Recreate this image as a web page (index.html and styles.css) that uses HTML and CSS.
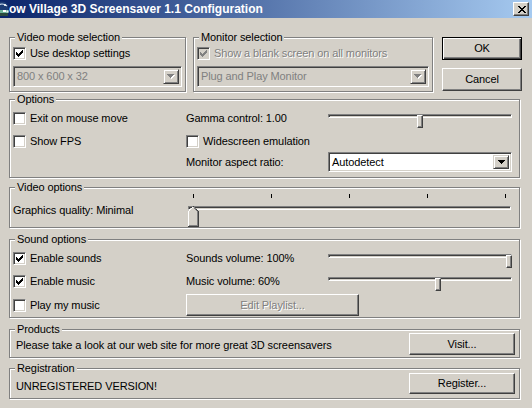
FILE: index.html
```html
<!DOCTYPE html>
<html>
<head>
<meta charset="utf-8">
<title>Snow Village 3D Screensaver 1.1 Configuration</title>
<link rel="stylesheet" href="styles.css">
</head>
<body>
<div class="window">
  <div class="titlebar">
    <svg class="app-icon" width="10" height="16" viewBox="6 0 10 16">
      <circle cx="8" cy="7" r="6.5" fill="#1d3c74"/>
      <path d="M3 5 Q8 1 13 5" stroke="#cfe0f0" stroke-width="1.2" fill="none"/>
      <circle cx="11" cy="4" r="1" fill="#ffffff"/>
      <rect x="1.5" y="9" width="13" height="3" fill="#6fb59a"/>
      <rect x="9" y="9" width="3" height="2" fill="#ffffff"/>
      <rect x="12.5" y="9.5" width="2" height="2" fill="#e8f4f0"/>
      <rect x="2" y="12" width="12" height="3" fill="#2c4a3e"/>
    </svg>
    <span class="title">ow Village 3D Screensaver 1.1 Configuration</span>
    <div class="close-btn">
      <svg width="8" height="7" viewBox="0 0 8 7" shape-rendering="crispEdges"><path fill="#000" d="M0 0h2v1h-2zM6 0h2v1h-2zM1 1h2v1h-2zM5 1h2v1h-2zM2 2h4v1h-4zM3 3h2v1h-2zM2 4h4v1h-4zM1 5h2v1h-2zM5 5h2v1h-2zM0 6h2v1h-2zM6 6h2v1h-2z"/></svg>
    </div>
  </div>

  <div class="client">
    <div class="row-top">
      <div class="group g-videomode">
        <span class="group-label">Video mode selection</span>
        <div class="check">
          <span class="box"><svg width="7" height="7" viewBox="0 0 7 7" shape-rendering="crispEdges"><path fill="#000" d="M6 0h1v1h-1zM5 1h2v1h-2zM0 2h1v1h-1zM4 2h3v1h-3zM0 3h2v1h-2zM3 3h3v1h-3zM0 4h5v1h-5zM1 5h3v1h-3zM2 6h1v1h-1z"/></svg></span>
          <span>Use desktop settings</span>
        </div>
        <div class="combo disabled w-videomode">
          <span class="combo-text">800 x 600 x 32</span>
          <span class="combo-btn"><svg width="8" height="5" viewBox="0 0 8 5" shape-rendering="crispEdges"><path fill="#fff" d="M1 1h7v1h-1v1h-1v1h-1v1h-1v-1h-1v-1h-1v-1h-1z"/><path fill="#808080" d="M0 0h7v1h-1v1h-1v1h-1v1h-1v-1h-1v-1h-1v-1h-1z"/></svg></span>
        </div>
      </div>

      <div class="group g-monitor">
        <span class="group-label">Monitor selection</span>
        <div class="check disabled">
          <span class="box"><svg width="7" height="7" viewBox="0 0 7 7" shape-rendering="crispEdges"><path fill="#808080" d="M6 0h1v1h-1zM5 1h2v1h-2zM0 2h1v1h-1zM4 2h3v1h-3zM0 3h2v1h-2zM3 3h3v1h-3zM0 4h5v1h-5zM1 5h3v1h-3zM2 6h1v1h-1z"/></svg></span>
          <span class="dis-text">Show a blank screen on all monitors</span>
        </div>
        <div class="combo disabled w-monitor">
          <span class="combo-text">Plug and Play Monitor</span>
          <span class="combo-btn"><svg width="8" height="5" viewBox="0 0 8 5" shape-rendering="crispEdges"><path fill="#fff" d="M1 1h7v1h-1v1h-1v1h-1v1h-1v-1h-1v-1h-1v-1h-1z"/><path fill="#808080" d="M0 0h7v1h-1v1h-1v1h-1v1h-1v-1h-1v-1h-1v-1h-1z"/></svg></span>
        </div>
      </div>

      <div class="btn-col">
        <div class="btn default btn-main">OK</div>
        <div class="btn btn-main">Cancel</div>
      </div>
    </div>

    <div class="group full g-options">
      <span class="group-label">Options</span>
      <div class="row r14">
        <div class="col-a">
          <div class="check"><span class="box"></span><span>Exit on mouse move</span></div>
        </div>
        <div class="col-b">Gamma control: 1.00</div>
        <div class="col-c">
          <div class="slider" style="--v:0.5"><div class="track"></div><div class="thumb"></div></div>
        </div>
      </div>
      <div class="row r14 gap9">
        <div class="col-a">
          <div class="check"><span class="box"></span><span>Show FPS</span></div>
        </div>
        <div class="col-bc">
          <div class="check"><span class="box"></span><span>Widescreen emulation</span></div>
        </div>
      </div>
      <div class="row r20 gap4">
        <div class="col-a"></div>
        <div class="col-b">Monitor aspect ratio:</div>
        <div class="col-c">
          <div class="combo w-aspect">
            <span class="combo-text">Autodetect</span>
            <span class="combo-btn"><svg width="7" height="4" viewBox="0 0 7 4" shape-rendering="crispEdges"><path fill="#000" d="M0 0h7v1h-1v1h-1v1h-1v1h-1v-1h-1v-1h-1v-1h-1z"/></svg></span>
          </div>
        </div>
      </div>
    </div>

    <div class="group full g-video">
      <span class="group-label">Video options</span>
      <div class="row">
        <div class="col-quality">Graphics quality: Minimal</div>
        <div class="tslider">
          <div class="ticks"><i></i><i></i><i></i><i></i><i></i></div>
          <div class="tbody" style="--v:0">
            <div class="track"></div>
            <svg class="pthumb" width="11" height="21" viewBox="0 0 11 21" shape-rendering="crispEdges">
              <polygon points="5.5,0.5 10.5,5.5 10.5,20.5 0.5,20.5 0.5,5.5" fill="#D4D0C8"/>
              <polyline points="0.5,20 0.5,5.5 5.5,0.5" fill="none" stroke="#ffffff" stroke-width="1"/>
              <polyline points="5.5,0.5 10.5,5.5 10.5,20.5 0,20.5" fill="none" stroke="#404040" stroke-width="1"/>
              <polyline points="6,1.5 9.5,5.5 9.5,19.5 1,19.5" fill="none" stroke="#808080" stroke-width="1"/>
            </svg>
          </div>
        </div>
      </div>
    </div>

    <div class="group full g-sound">
      <span class="group-label">Sound options</span>
      <div class="row r14">
        <div class="col-a">
          <div class="check"><span class="box"><svg width="7" height="7" viewBox="0 0 7 7" shape-rendering="crispEdges"><path fill="#000" d="M6 0h1v1h-1zM5 1h2v1h-2zM0 2h1v1h-1zM4 2h3v1h-3zM0 3h2v1h-2zM3 3h3v1h-3zM0 4h5v1h-5zM1 5h3v1h-3zM2 6h1v1h-1z"/></svg></span><span>Enable sounds</span></div>
        </div>
        <div class="col-b">Sounds volume: 100%</div>
        <div class="col-c">
          <div class="slider" style="--v:1"><div class="track"></div><div class="thumb"></div></div>
        </div>
      </div>
      <div class="row r14 gap9">
        <div class="col-a">
          <div class="check"><span class="box"><svg width="7" height="7" viewBox="0 0 7 7" shape-rendering="crispEdges"><path fill="#000" d="M6 0h1v1h-1zM5 1h2v1h-2zM0 2h1v1h-1zM4 2h3v1h-3zM0 3h2v1h-2zM3 3h3v1h-3zM0 4h5v1h-5zM1 5h3v1h-3zM2 6h1v1h-1z"/></svg></span><span>Enable music</span></div>
        </div>
        <div class="col-b">Music volume: 60%</div>
        <div class="col-c">
          <div class="slider" style="--v:0.6"><div class="track"></div><div class="thumb"></div></div>
        </div>
      </div>
      <div class="row r22 gap6">
        <div class="col-a">
          <div class="check"><span class="box"></span><span>Play my music</span></div>
        </div>
        <div class="btn btn-playlist dis-text">Edit Playlist...</div>
      </div>
    </div>

    <div class="group full g-products">
      <span class="group-label">Products</span>
      <div class="line-row">
        <span class="line-text">Please take a look at our web site for more great 3D screensavers</span>
        <div class="btn btn-wide">Visit...</div>
      </div>
    </div>

    <div class="group full g-reg">
      <span class="group-label">Registration</span>
      <div class="line-row">
        <span class="line-text">UNREGISTERED VERSION!</span>
        <div class="btn btn-wide btn-reg">Register...</div>
      </div>
    </div>
  </div>
</div>
</body>
</html>
```

FILE: styles.css
```css
* { box-sizing: border-box; }
html, body { margin: 0; padding: 0; }
body {
  width: 532px;
  height: 408px;
  overflow: hidden;
  background: #D4D0C8;
  font-family: "Liberation Sans", Arial, sans-serif;
  font-size: 11px;
  line-height: 13px;
  letter-spacing: -0.1px;
  color: #000;
}
.window { width: 532px; height: 408px; }

/* title bar */
.titlebar {
  height: 18px;
  display: flex;
  align-items: center;
  background: linear-gradient(to right, #0A246A, #A6CAF0);
  padding-right: 3px;
}
.app-icon { flex: none; display: block; }
.title {
  flex: 1;
  color: #fff;
  font-weight: bold;
  font-size: 12px;
  letter-spacing: 0;
  white-space: nowrap;
  margin-left: -1px;
}
.close-btn {
  width: 16px;
  height: 14px;
  flex: none;
  display: flex;
  align-items: center;
  justify-content: center;
  padding-left: 1px;
  background: #D4D0C8;
  border: 1px solid;
  border-color: #fff #404040 #404040 #fff;
  box-shadow: inset -1px -1px 0 #808080;
}
.close-btn svg { display: block; }

/* client */
.client { padding: 19px 0 0 9px; }
.row-top { display: flex; align-items: flex-start; }

.group {
  position: relative;
  border: 1px solid #808080;
  box-shadow: inset 1px 1px 0 #fff, 1px 1px 0 #fff;
}
.group-label {
  position: absolute;
  top: -7px;
  left: 5px;
  padding: 0 2px;
  background: #D4D0C8;
  white-space: nowrap;
}
.full { width: 511px; }

.g-videomode { width: 177px; height: 55px; padding: 9px 0 0 3px; }
.g-monitor { width: 240px; height: 55px; padding: 9px 0 0 3px; margin-left: 7px; }
.g-videomode .combo, .g-monitor .combo { margin-top: 6px; }
.w-videomode { width: 169px; }
.w-monitor { width: 232px; }

.btn-col { margin-left: 9px; display: flex; flex-direction: column; gap: 8px; }

/* buttons */
.btn {
  display: flex;
  align-items: center;
  justify-content: center;
  background: #D4D0C8;
  border: 1px solid;
  border-color: #fff #404040 #404040 #fff;
  box-shadow: inset -1px -1px 0 #808080;
  white-space: nowrap;
}
.btn.default {
  border-color: #000;
  box-shadow: inset 1px 1px 0 #fff, inset -1px -1px 0 #404040, inset -2px -2px 0 #808080;
}
.btn-main { width: 80px; height: 23px; }
.btn-playlist { width: 173px; height: 22px; }
.btn-wide { width: 106px; height: 22px; flex: none; }
.btn-reg { height: 21px; }

.dis-text { color: #808080; text-shadow: 1px 1px 0 #fff; }

/* checkbox */
.check { display: flex; align-items: center; gap: 4px; height: 13px; white-space: nowrap; }
.box {
  width: 13px;
  height: 13px;
  flex: none;
  display: flex;
  align-items: center;
  justify-content: center;
  background: #fff;
  border: 1px solid;
  border-color: #808080 #fff #fff #808080;
  box-shadow: inset 1px 1px 0 #404040, inset -1px -1px 0 #D4D0C8;
}
.box svg { display: block; }
.check.disabled .box { background: #D4D0C8; }

/* combobox */
.combo {
  height: 21px;
  display: flex;
  background: #fff;
  border: 1px solid;
  border-color: #808080 #fff #fff #808080;
  box-shadow: inset 1px 1px 0 #404040, inset -1px -1px 0 #D4D0C8;
  padding: 2px;
}
.combo.disabled { background: #D4D0C8; color: #808080; }
.combo-text { flex: 1; padding-left: 1px; line-height: 15px; white-space: nowrap; overflow: hidden; }
.combo-btn {
  width: 16px;
  flex: none;
  display: flex;
  align-items: center;
  justify-content: center;
  background: #D4D0C8;
  border: 1px solid;
  border-color: #D4D0C8 #404040 #404040 #D4D0C8;
  box-shadow: inset 1px 1px 0 #fff, inset -1px -1px 0 #808080;
}
.combo-btn svg { display: block; }
.w-aspect { width: 184px; height: 20px; }

/* rows */
.g-options { margin-top: 7px; height: 79px; padding: 11px 0 0 3px; }
.g-sound { margin-top: 11px; height: 79px; padding: 11px 0 0 3px; }
.row { display: flex; align-items: center; }
.r14 { height: 14px; }
.r20 { height: 20px; }
.r22 { height: 22px; }
.gap9 { margin-top: 9px; }
.gap4 { margin-top: 4px; }
.gap6 { margin-top: 6px; }
.col-a { width: 173px; flex: none; }
.col-b { width: 142px; flex: none; white-space: nowrap; }
.col-c { width: 184px; flex: none; }
.col-bc { width: 326px; flex: none; }

/* small slider */
.slider { position: relative; width: 184px; height: 14px; }
.track {
  height: 4px;
  border-top: 1px solid #808080;
  border-left: 1px solid #808080;
  border-bottom: 1px solid #fff;
  border-right: 1px solid #fff;
  box-shadow: inset 1px 1px 0 #404040;
}
.slider .track { margin-top: 5px; }
.thumb {
  position: absolute;
  top: 1px;
  left: calc(var(--v) * (100% - 6px));
  width: 6px;
  height: 13px;
  background: #D4D0C8;
  border: 1px solid;
  border-color: #fff #404040 #404040 #fff;
  box-shadow: inset -1px -1px 0 #808080;
}

/* video options */
.g-video { margin-top: 9px; height: 41px; padding: 5px 0 0 3px; }
.g-video .row { align-items: flex-start; }
.col-quality { width: 175px; flex: none; margin-top: 11px; white-space: nowrap; }
.tslider { width: 323px; }
.ticks { display: flex; justify-content: space-between; width: 313px; height: 4px; margin-left: 5px; margin-top: 1px; }
.ticks i { display: block; width: 1px; height: 4px; background: #000; }
.tbody { position: relative; height: 21px; margin-top: 2px; }
.tbody .track { margin-top: 8px; width: 323px; }
.pthumb { position: absolute; top: 0; left: calc(var(--v) * (100% - 11px)); display: block; }

/* products / registration */
.g-products { margin-top: 11px; height: 29px; padding: 3px 4px 0 6px; }
.g-reg { margin-top: 10px; height: 31px; padding: 4px 4px 0 6px; }
.line-row { display: flex; justify-content: space-between; align-items: flex-start; }
.line-text { white-space: nowrap; margin-top: 6px; }
.g-reg .line-text { margin-top: 7px; }
```
